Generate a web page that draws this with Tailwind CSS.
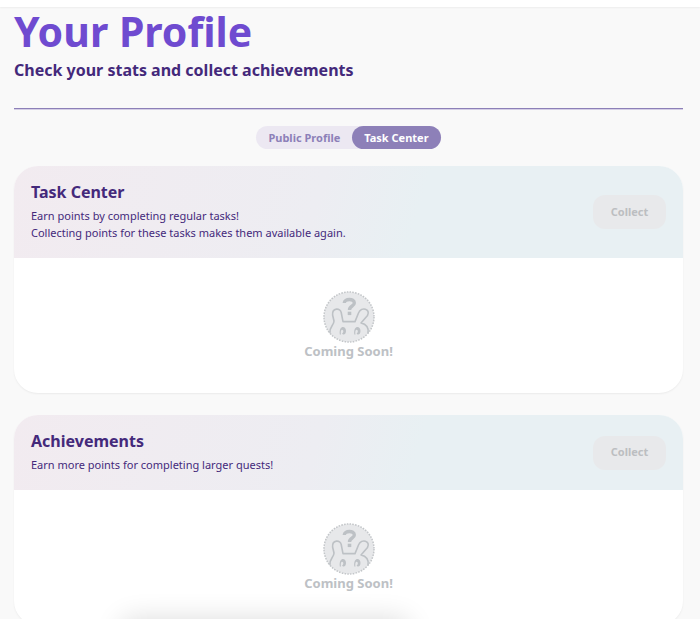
<!DOCTYPE html>
<html lang="en">
<head>
  <meta charset="UTF-8">
  <meta name="viewport" content="width=device-width, initial-scale=1.0">
  <title>Your Profile</title>
  <script src="https://cdn.jsdelivr.net/npm/@tailwindcss/browser@4"></script>
</head>
<body class="bg-[#f9f9f9] text-[#44297b] font-['Noto_Sans',sans-serif] h-screen overflow-hidden">
  <header class="h-[7px] bg-white shadow-[0_1px_2px_rgba(0,0,0,0.05)]"></header>

  <main class="pl-3.5 pr-[17px]">
    <h1 class="text-[41px] leading-[48px] font-bold text-[#6f4bd0]">Your Profile</h1>
    <p class="mt-1 text-base leading-[22px] font-bold">Check your stats and collect achievements</p>
    <hr class="mt-[27px] border-t border-[#8d80b8] shadow-[0_1px_0_#d5cfe6]">

    <nav class="mt-[17px] flex justify-center">
      <div class="flex rounded-full bg-[#ece8f2] text-[11px] leading-[23px] font-bold">
        <a href="#profile" class="px-3 text-[#8d80b8]">Public Profile</a>
        <a href="#tasks" class="rounded-full bg-[#8d80b8] px-3 text-white">Task Center</a>
      </div>
    </nav>

    <section class="mt-[17px] overflow-hidden rounded-3xl bg-white shadow-[0_1px_2px_rgba(0,0,0,0.06)]">
      <div class="flex items-center justify-between bg-[linear-gradient(107deg,#f2ebf0,#ededf2_45%,#e8f0f3_60%,#e8f0f3)] p-[17px]">
        <div>
          <h2 class="text-base leading-[18px] font-bold">Task Center</h2>
          <p class="mt-1.5 text-[11px] leading-[17px]">Earn points by completing regular tasks!<br>Collecting points for these tasks makes them available again.</p>
        </div>
        <button class="h-[34px] w-[73px] rounded-xl bg-[#e8e9eb] text-[11px] font-bold text-[#bcbec1]" disabled>Collect</button>
      </div>
      <div class="flex flex-col items-center pt-[33px] pb-[33px]">
        <svg class="size-[52px]" viewBox="0 0 52 52" fill="none">
          <circle cx="26" cy="26" r="25" fill="#e7e8ea" stroke="#c3c6c9" stroke-width="1.5" stroke-dasharray="1.6 1.2"/>
          <path d="M21.3 12C21.3 7.5 31.3 7 31.3 12C31.3 15.5 26.5 14.5 26.5 19" stroke="#bdc1c5" stroke-width="3.4"/>
          <path d="M24.7 20.7h3.6v3.4h-3.6z" fill="#bdc1c5"/>
          <path d="M7 42C6 36 11 34.5 11 30L9.6 24C9 16.5 17.5 16.5 18.3 22L20 30.6H32L35.5 22C38.5 15 48 18 44.5 24.5L38 32C43.5 33 46 37 45 42" stroke="#bdc1c5" stroke-width="1.6" stroke-linejoin="round"/>
          <path d="M16.8 43.5C15.6 34 23 34.5 23 40C23 44 19.5 44.5 19.2 42C21 42 20.5 38 18.8 38.8C17.6 39.5 17.6 42 18 43.5Z" fill="#bdc1c5"/>
          <path d="M31.3 43.5C30.1 34 37.5 34.5 37.5 40C37.5 44 34 44.5 33.7 42C35.5 42 35 38 33.3 38.8C32.1 39.5 32.1 42 32.5 43.5Z" fill="#bdc1c5"/>
        </svg>
        <p class="text-[13px] leading-[17px] font-bold text-[#bdc1c5]">Coming Soon!</p>
      </div>
    </section>

    <section class="mt-[22px] overflow-hidden rounded-3xl bg-white shadow-[0_1px_2px_rgba(0,0,0,0.06)]">
      <div class="flex items-center justify-between bg-[linear-gradient(107deg,#f2ebf0,#ededf2_45%,#e8f0f3_60%,#e8f0f3)] p-[17px]">
        <div>
          <h2 class="text-base leading-[18px] font-bold">Achievements</h2>
          <p class="mt-1.5 text-[11px] leading-[17px]">Earn more points for completing larger quests!</p>
        </div>
        <button class="h-[34px] w-[73px] rounded-xl bg-[#e8e9eb] text-[11px] font-bold text-[#bcbec1]" disabled>Collect</button>
      </div>
      <div class="flex flex-col items-center pt-[33px] pb-[33px]">
        <svg class="size-[52px]" viewBox="0 0 52 52" fill="none">
          <circle cx="26" cy="26" r="25" fill="#e7e8ea" stroke="#c3c6c9" stroke-width="1.5" stroke-dasharray="1.6 1.2"/>
          <path d="M21.3 12C21.3 7.5 31.3 7 31.3 12C31.3 15.5 26.5 14.5 26.5 19" stroke="#bdc1c5" stroke-width="3.4"/>
          <path d="M24.7 20.7h3.6v3.4h-3.6z" fill="#bdc1c5"/>
          <path d="M7 42C6 36 11 34.5 11 30L9.6 24C9 16.5 17.5 16.5 18.3 22L20 30.6H32L35.5 22C38.5 15 48 18 44.5 24.5L38 32C43.5 33 46 37 45 42" stroke="#bdc1c5" stroke-width="1.6" stroke-linejoin="round"/>
          <path d="M16.8 43.5C15.6 34 23 34.5 23 40C23 44 19.5 44.5 19.2 42C21 42 20.5 38 18.8 38.8C17.6 39.5 17.6 42 18 43.5Z" fill="#bdc1c5"/>
          <path d="M31.3 43.5C30.1 34 37.5 34.5 37.5 40C37.5 44 34 44.5 33.7 42C35.5 42 35 38 33.3 38.8C32.1 39.5 32.1 42 32.5 43.5Z" fill="#bdc1c5"/>
        </svg>
        <p class="text-[13px] leading-[17px] font-bold text-[#bdc1c5]">Coming Soon!</p>
      </div>
    </section>
  </main>

  <div class="fixed top-full left-[121px] h-16 w-[288px] rounded-xl shadow-[0_0_28px_rgba(0,0,0,0.14)]"></div>
</body>
</html>
